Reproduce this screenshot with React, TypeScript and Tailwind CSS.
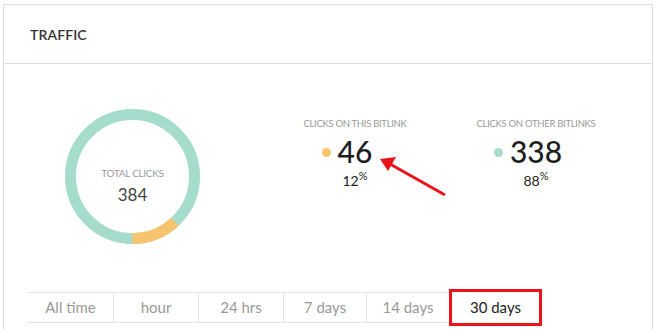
import React from 'react';

const tabs = [
  { label: 'All time', w: 'w-[85px]' },
  { label: 'hour', w: 'w-[85px]' },
  { label: '24 hrs', w: 'w-[85px]' },
  { label: '7 days', w: 'w-[83px]' },
  { label: '14 days', w: 'w-[83px]' },
];

const Donut: React.FC = () => {
  const r = 62;
  const c = 2 * Math.PI * r;
  const share = 0.12;
  return (
    <div className="relative w-[135px] h-[135px] shrink-0">
      <svg width="135" height="135" viewBox="0 0 135 135">
        <circle cx="67.5" cy="67.5" r={r} fill="none" stroke="#a6dccb" strokeWidth="11" />
        {/* this link's slice, ending at 6 o'clock */}
        <circle
          cx="67.5"
          cy="67.5"
          r={r}
          fill="none"
          stroke="#f8c36f"
          strokeWidth="11"
          strokeDasharray={`${c * share} ${c}`}
          transform={`rotate(${90 - share * 360} 67.5 67.5)`}
        />
      </svg>
      <div className="absolute inset-x-0 top-[59px] flex flex-col items-center">
        <span className="text-[10px] leading-none text-[#9a9a9a] tracking-[-0.3px]">TOTAL CLICKS</span>
        <span className="mt-[8px] text-[17px] leading-none text-[#444]">384</span>
      </div>
    </div>
  );
};

const Stat: React.FC<{ label: string; value: string; pct: string; dot: string }> = ({ label, value, pct, dot }) => (
  <div className="w-[150px] flex flex-col items-center">
    <span className="text-[9.5px] leading-none text-[#9a9a9a] tracking-[-0.3px] whitespace-nowrap">{label}</span>
    <div className="relative mt-[8px]">
      <span className={`absolute -left-[16px] top-[11px] w-[9px] h-[9px] rounded-full ${dot}`} />
      <span className="block text-[30px] leading-[28px] font-medium text-[#1e1e1e]">{value}</span>
    </div>
    <div className="mt-[9px] flex items-start">
      <span className="text-[14px] leading-none text-[#222]">{pct}</span>
      <span className="text-[11px] leading-none text-[#222] -mt-[4px]">%</span>
    </div>
  </div>
);

export default function App() {
  return (
    <div className="relative w-[660px] h-[329px] overflow-hidden bg-white pt-[4px] pl-[3px]" style={{ fontFamily: 'Lato, "Open Sans", sans-serif' }}>
      <div className="w-[650px] border border-[#dddddd] pb-[30px]">
        <div className="h-[59px] pl-[26px] flex items-center border-b border-[#dddddd]">
          <span className="text-[14px] font-semibold text-[#333] tracking-[0.1px]">TRAFFIC</span>
        </div>

        <div className="flex pt-[45px] pl-[61px]">
          <Donut />
          <div className="flex ml-[80px] mt-[10px] gap-[31px]">
            <Stat label="CLICKS ON THIS BITLINK" value="46" pct="12" dot="bg-[#f8c36f]" />
            <Stat label="CLICKS ON OTHER BITLINKS" value="338" pct="88" dot="bg-[#a6dccb]" />
          </div>
        </div>

        <div className="flex ml-[24px] mt-[48px] h-[31px]">
          {tabs.map((t, i) => (
            <div
              key={t.label}
              className={`${t.w} flex items-center justify-center border-y border-[#e3e3e3] text-[15px] text-[#9a9a9a] ${i > 0 ? 'border-l' : ''}`}
            >
              {t.label}
            </div>
          ))}
          <div className="w-[93px] -mt-[3px] h-[37px] flex items-center justify-center border-[3px] border-[#e8141a] text-[15px] text-[#222]">
            30 days
          </div>
        </div>
      </div>

      {/* annotation arrow */}
      <svg className="absolute left-0 top-0" width="660" height="329">
        <line x1="445" y1="195" x2="390" y2="164" stroke="#e8141a" strokeWidth="3" />
        <polygon points="380,159 396,157 388,171" fill="#e8141a" />
      </svg>
    </div>
  );
}
